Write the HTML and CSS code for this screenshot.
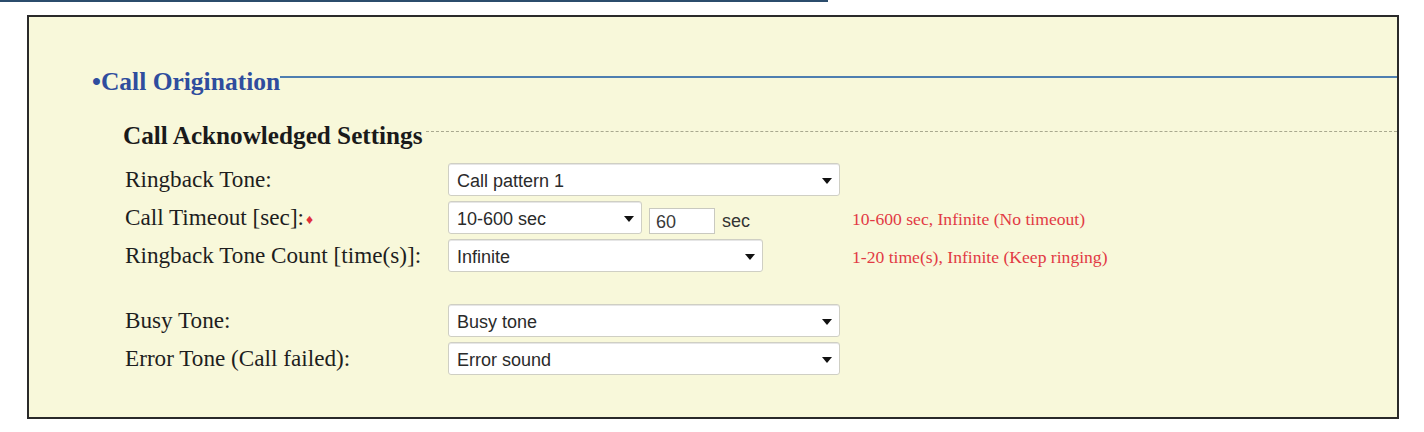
FILE: index.html
```html
<!DOCTYPE html>
<html lang="en">
<head>
  <meta charset="UTF-8">
  <meta name="viewport" content="width=device-width, initial-scale=1.0">
  <title>Call Origination</title>
  <link rel="stylesheet" href="styles.css">
</head>
<body>
  <div class="top-rule"></div>

  <div class="panel">
    <div class="group-title"><span>&bull;Call Origination</span></div>
    <div class="sub-title"><span>Call Acknowledged Settings</span></div>

    <div class="form">
      <label class="field-label">Ringback Tone:</label>
      <div class="field-control">
        <div class="select-box wide">
          <select><option>Call pattern 1</option></select>
        </div>
      </div>
      <div class="field-hint"></div>

      <label class="field-label">Call Timeout [sec]:<span class="required">&diams;</span></label>
      <div class="field-control">
        <div class="select-box short">
          <select><option>10-600 sec</option></select>
        </div>
        <input type="text" class="num-input" value="60">
        <span class="unit">sec</span>
      </div>
      <div class="field-hint">10-600 sec, Infinite (No timeout)</div>

      <label class="field-label">Ringback Tone Count [time(s)]:</label>
      <div class="field-control">
        <div class="select-box medium">
          <select><option>Infinite</option></select>
        </div>
      </div>
      <div class="field-hint">1-20 time(s), Infinite (Keep ringing)</div>

      <div class="form-gap"></div>

      <label class="field-label">Busy Tone:</label>
      <div class="field-control">
        <div class="select-box wide">
          <select><option>Busy tone</option></select>
        </div>
      </div>
      <div class="field-hint"></div>

      <label class="field-label">Error Tone (Call failed):</label>
      <div class="field-control">
        <div class="select-box wide">
          <select><option>Error sound</option></select>
        </div>
      </div>
      <div class="field-hint"></div>
    </div>
  </div>
</body>
</html>
```

FILE: styles.css
```css
body {
  margin: 0;
  background-color: #ffffff;
  font-family: "Liberation Serif", "Times New Roman", serif;
  color: #1e1e1e;
}

.top-rule {
  width: 828px;
  height: 2px;
  background-color: #2b4c6c;
}

.panel {
  margin: 13px 25px 0 27px;
  border: 2px solid #2a2a2a;
  background-color: #f8f8da;
  padding: 51px 0 42px 0;
}

/* group heading with a rule running to the right edge */
.group-title {
  display: flex;
  align-items: flex-start;
  padding-left: 63px;
  font-size: 25.5px;
  line-height: 28px;
  font-weight: bold;
  color: #2f4d9e;
}

.group-title::after {
  content: "";
  flex: 1;
  margin-top: 8px;
  border-top: 2px solid #4f7fb0;
}

.sub-title {
  display: flex;
  align-items: flex-start;
  margin-top: 26px;
  padding-left: 94px;
  font-size: 25.2px;
  line-height: 28px;
  font-weight: bold;
  color: #1a1a1a;
}

.sub-title::after {
  content: "";
  flex: 1;
  margin: 9px 0 0 4px;
  border-top: 1px dashed #a9a98f;
}

.form {
  display: grid;
  grid-template-columns: 323px 404px 1fr;
  grid-template-rows: 33px 33px 33px 22px 33px 33px;
  row-gap: 5px;
  margin-top: 13px;
  padding-left: 96px;
}

.form-gap {
  grid-column: 1 / -1;
}

.field-label {
  font-size: 23.2px;
  line-height: 33px;
  white-space: nowrap;
}

.required {
  color: #e0303a;
  font-size: 14px;
  margin-left: 2px;
  vertical-align: 1px;
}

.field-control {
  display: flex;
  align-items: flex-end;
  gap: 7px;
}

.field-hint {
  padding-top: 2px;
  font-size: 17.6px;
  line-height: 33px;
  color: #e23a44;
  white-space: nowrap;
}

.select-box {
  position: relative;
  height: 33px;
}

.select-box.wide { width: 392px; }
.select-box.short { width: 194px; }
.select-box.medium { width: 315px; }

.select-box select {
  appearance: none;
  -webkit-appearance: none;
  width: 100%;
  height: 100%;
  margin: 0;
  padding: 2px 24px 0 8px;
  border: 1px solid #cfcfc4;
  border-radius: 3px;
  background-color: #ffffff;
  font-family: "Liberation Sans", Arial, sans-serif;
  font-size: 18px;
  color: #2a2a2a;
  box-shadow: inset 0 1px 0 #e6e6e6;
}

/* drop-down arrow */
.select-box::after {
  content: "";
  position: absolute;
  right: 8px;
  top: 15px;
  border-left: 5px solid transparent;
  border-right: 5px solid transparent;
  border-top: 6px solid #111111;
  pointer-events: none;
}

.num-input {
  width: 66px;
  height: 26px;
  box-sizing: border-box;
  margin: 0;
  padding: 2px 0 0 6px;
  border: 1px solid #c9c9c0;
  background-color: #ffffff;
  font-family: "Liberation Sans", Arial, sans-serif;
  font-size: 18px;
  color: #3a3a3a;
}

.unit {
  font-family: "Liberation Sans", Arial, sans-serif;
  font-size: 18px;
  line-height: 26px;
  color: #333333;
}
```
